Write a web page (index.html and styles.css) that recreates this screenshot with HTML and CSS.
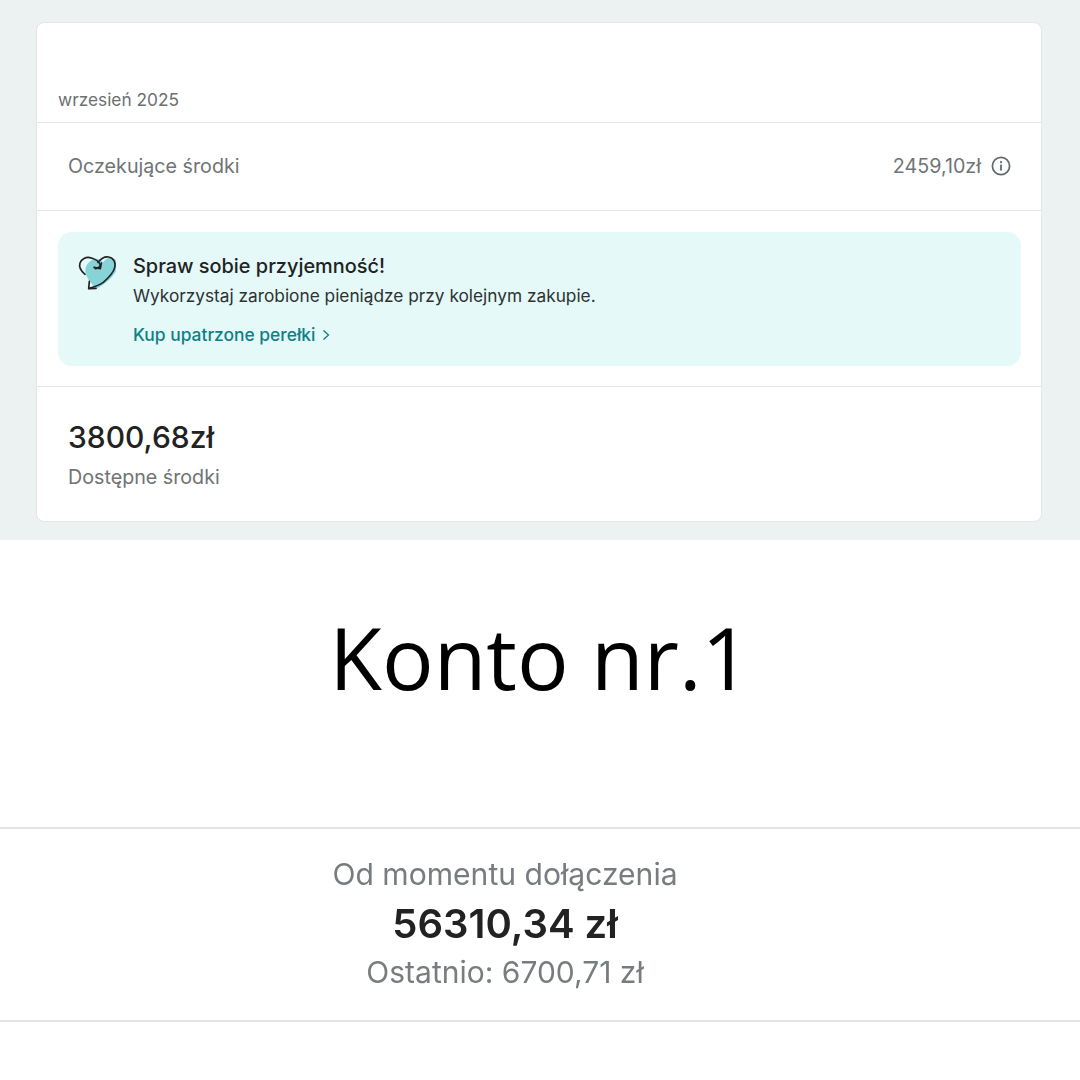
FILE: index.html
```html
<!DOCTYPE html>
<html lang="pl">
<head>
  <meta charset="UTF-8" />
  <title>Konto nr.1</title>
  <link rel="stylesheet" href="styles.css">
</head>
<body>
  <section class="top">
    <div class="card">
      <div class="month">wrzesień 2025</div>
      <div class="pending">
        <span>Oczekujące środki</span>
        <span class="pending-value">2459,10zł
          <svg class="info" viewBox="0 0 20 20" width="20" height="20">
            <circle cx="10" cy="10" r="8.6" fill="none" stroke="#5f6b6b" stroke-width="1.7"/>
            <circle cx="10" cy="6.2" r="1.1" fill="#5f6b6b"/>
            <rect x="9.1" y="8.6" width="1.8" height="6" fill="#5f6b6b"/>
          </svg>
        </span>
      </div>
      <div class="promo-wrap">
        <div class="promo">
          <svg class="heart" viewBox="18 27 120 120" width="40" height="40">
            <path d="M62 48C75 34 92 44 100 52C108 38 128 32 140 48C148 66 138 84 122 100C108 114 92 126 78 132C70 122 56 108 50 94C42 78 46 58 62 48Z" fill="#86d3d8"/>
            <path d="M45 88C33 78 26 66 30 54C34 42 48 35 60 38C74 41 88 50 91 60C90 66 84 70 76 71" fill="none" stroke="#222" stroke-width="5" stroke-linecap="round"/>
            <path d="M94 54L91 71L72 67" fill="none" stroke="#222" stroke-width="5" stroke-linecap="round" stroke-linejoin="round"/>
            <path d="M84 52C92 42 104 34 116 36C130 38 138 52 134 68C130 84 114 100 100 112C88 120 72 126 58 130" fill="none" stroke="#222" stroke-width="5" stroke-linecap="round"/>
            <path d="M58 109L56 131L78 130" fill="none" stroke="#222" stroke-width="5" stroke-linecap="round" stroke-linejoin="round"/>
          </svg>
          <div class="promo-text">
            <div class="promo-title">Spraw sobie przyjemność!</div>
            <div class="promo-desc">Wykorzystaj zarobione pieniądze przy kolejnym zakupie.</div>
            <div class="promo-link">Kup upatrzone perełki
              <svg viewBox="0 0 10 12" width="10" height="12"><path d="M2.500 1.500L7.500 6L2.500 10.500" fill="none" stroke="#0f7f86" stroke-width="1.300"/></svg>
            </div>
          </div>
        </div>
      </div>
      <div class="available">
        <div class="amount">3800,68zł</div>
        <div class="amount-label">Dostępne środki</div>
      </div>
    </div>
  </section>

  <h1 class="heading">Konto nr.1</h1>

  <section class="summary">
    <div class="summary-label">Od momentu dołączenia</div>
    <div class="summary-amount">56310,34 zł</div>
    <div class="summary-last">Ostatnio: 6700,71 zł</div>
  </section>
</body>
</html>
```

FILE: styles.css
```css
html, body {
  margin: 0;
  padding: 0;
}
body {
  width: 1080px;
  height: 1080px;
  overflow: hidden;
  background: #fff;
  font-family: 'Inter', sans-serif;
  color: #222;
}
.top {
  box-sizing: border-box;
  height: 540px;
  padding: 22px 38px 0 36px;
  background: #ecf2f1;
}
.card {
  box-sizing: border-box;
  height: 500px;
  background: #fff;
  border: 1px solid #e2e6e6;
  border-radius: 8px;
}
.month {
  box-sizing: border-box;
  height: 100px;
  padding: 67px 0 0 21px;
  font-size: 17.3px;
  line-height: 20px;
  color: #6b7070;
  border-bottom: 1px solid #e2e6e6;
}
.pending {
  box-sizing: border-box;
  height: 88px;
  padding: 0 30px 1px 31px;
  display: flex;
  align-items: center;
  justify-content: space-between;
  font-size: 19.7px;
  color: #6f7474;
  border-bottom: 1px solid #e2e6e6;
}
.pending-value {
  display: flex;
  align-items: center;
  gap: 10px;
}
.promo-wrap {
  box-sizing: border-box;
  height: 176px;
  padding: 21px 20px 0 21px;
  border-bottom: 1px solid #e2e6e6;
}
.promo {
  box-sizing: border-box;
  height: 134px;
  padding: 20px 20px 0 18px;
  display: flex;
  gap: 17px;
  background: #e4f9f8;
  border-radius: 14px;
}
.heart {
  flex: none;
  margin-top: 2px;
}
.promo-title {
  font-size: 19.900px;
  font-weight: 500;
  line-height: 28px;
  color: #222;
}
.promo-desc {
  margin-top: 5px;
  font-size: 17.270px;
  line-height: 22px;
  color: #2d3232;
}
.promo-link {
  margin-top: 17px;
  display: flex;
  align-items: center;
  gap: 6px;
  font-size: 17.400px;
  font-weight: 500;
  line-height: 22px;
  color: #0f7f86;
}
.available {
  padding: 31px 0 0 31px;
}
.amount {
  font-size: 30px;
  font-weight: 500;
  line-height: 38px;
  color: #222;
}
.amount-label {
  margin-top: 8px;
  font-size: 19.700px;
  line-height: 26px;
  color: #6f7474;
}
.heading {
  margin: 0;
  height: 287px;
  box-sizing: border-box;
  padding-top: 64px;
  text-align: center;
  font-family: 'Open Sans', sans-serif;
  font-size: 86px;
  font-weight: 400;
  line-height: 106px;
  color: #000;
}
.summary {
  box-sizing: border-box;
  height: 195px;
  padding: 25px 70px 0 0;
  border-top: 2px solid #e4e4e4;
  border-bottom: 2px solid #e4e4e4;
  text-align: center;
}
.summary-label {
  font-size: 30.100px;
  line-height: 40px;
  color: #777c7f;
  filter: blur(0.5px);
}
.summary-amount {
  margin-top: 5px;
  font-size: 40px;
  font-weight: 600;
  line-height: 50px;
  color: #222;
  filter: blur(0.5px);
}
.summary-last {
  margin-top: 3px;
  font-size: 30px;
  line-height: 40px;
  color: #777c7f;
  filter: blur(0.5px);
}
```
